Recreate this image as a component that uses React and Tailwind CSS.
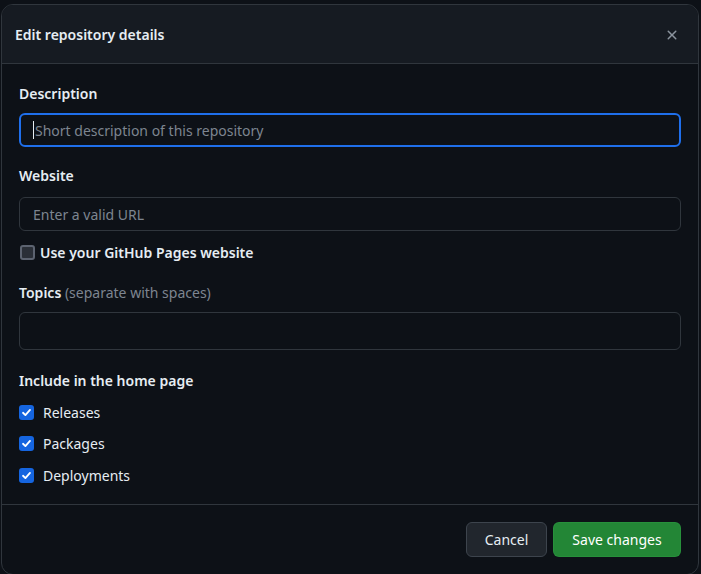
import React from "react";

function Check({ checked }) {
  if (!checked) {
    return (
      <span className="w-[15px] h-[15px] shrink-0 rounded-[3px] border-2 border-[#5c6370] bg-[#2a2f37]" />
    );
  }
  return (
    <span className="w-[15px] h-[15px] shrink-0 rounded-[3px] bg-[#1565e0] flex items-center justify-center">
      <svg width="11" height="11" viewBox="0 0 12 12" fill="none">
        <path d="M2.2 6.3 4.8 8.8 9.8 3.2" stroke="#fff" strokeWidth="2" strokeLinecap="round" strokeLinejoin="round" />
      </svg>
    </span>
  );
}

export default function App() {
  return (
    <div
      className="w-[701px] h-[574px] overflow-hidden bg-[#0d1117] pt-[4px] pl-[1px] text-[#e6edf3]"
      style={{ fontFamily: '"Noto Sans", "Open Sans", sans-serif' }}
    >
      <div className="w-[698px] h-[571px] rounded-xl border border-[#30363d] bg-[#0d1117] flex flex-col overflow-hidden">
        <div className="h-[59px] shrink-0 bg-[#161b22] border-b border-[#30363d] flex items-center justify-between pl-[13px] pr-[18px] pt-[2px]">
          <h1 className="text-[14px] font-semibold leading-5">Edit repository details</h1>
          <svg width="16" height="16" viewBox="0 0 16 16" fill="#8b949e">
            <path d="M3.72 3.72a.75.75 0 0 1 1.06 0L8 6.94l3.22-3.22a.749.749 0 0 1 1.275.326.749.749 0 0 1-.215.734L9.06 8l3.22 3.22a.749.749 0 0 1-.326 1.275.749.749 0 0 1-.734-.215L8 9.06l-3.22 3.22a.751.751 0 0 1-1.042-.018.751.751 0 0 1-.018-1.042L6.94 8 3.72 4.78a.75.75 0 0 1 0-1.06Z" />
          </svg>
        </div>

        <div className="flex-1 flex flex-col px-[17px] pt-[20px] text-[14px]">
          <label className="font-semibold leading-5">Description</label>
          <div className="mt-[9px] h-[34px] rounded-[6px] border-2 border-[#1f6feb] flex items-center pl-[12px]">
            <span className="w-px h-[18px] bg-[#e6edf3] mr-[1px]" />
            <span className="text-[#7d8590]">Short description of this repository</span>
          </div>

          <label className="mt-[19px] font-semibold leading-5">Website</label>
          <div className="mt-[11px] h-[34px] rounded-[6px] border border-[#30363d] flex items-center pl-[13px]">
            <span className="text-[#7d8590]">Enter a valid URL</span>
          </div>

          <div className="mt-[11px] h-5 flex items-center gap-[5px] pl-[1px]">
            <Check checked={false} />
            <span className="font-semibold">Use your GitHub Pages website</span>
          </div>

          <label className="mt-[21px] leading-5">
            <span className="font-semibold">Topics</span>{" "}
            <span className="text-[#7d8590]">(separate with spaces)</span>
          </label>
          <div className="mt-[9px] h-[38px] rounded-[6px] border border-[#30363d]" />

          <label className="mt-[21px] font-semibold leading-5">Include in the home page</label>
          <div className="mt-[11px] flex flex-col gap-[11px]">
            {["Releases", "Packages", "Deployments"].map((t, i) => (
              <div key={t} className={"h-5 flex items-center gap-[9px]" + (i === 2 ? " mt-px" : "")}>
                <Check checked />
                <span>{t}</span>
              </div>
            ))}
          </div>
        </div>

        <div className="h-[70px] shrink-0 border-t border-[#30363d] flex justify-end gap-[6px] pr-[17px] pt-[17px]">
          <button className="h-[35px] w-[81px] rounded-[6px] border border-[#3d444d] bg-[#21262d] text-[14px] text-[#e6edf3]">
            Cancel
          </button>
          <button className="h-[35px] w-[128px] rounded-[6px] border border-[#2ea043]/40 bg-[#238636] text-[14px] text-white">
            Save changes
          </button>
        </div>
      </div>
    </div>
  );
}
